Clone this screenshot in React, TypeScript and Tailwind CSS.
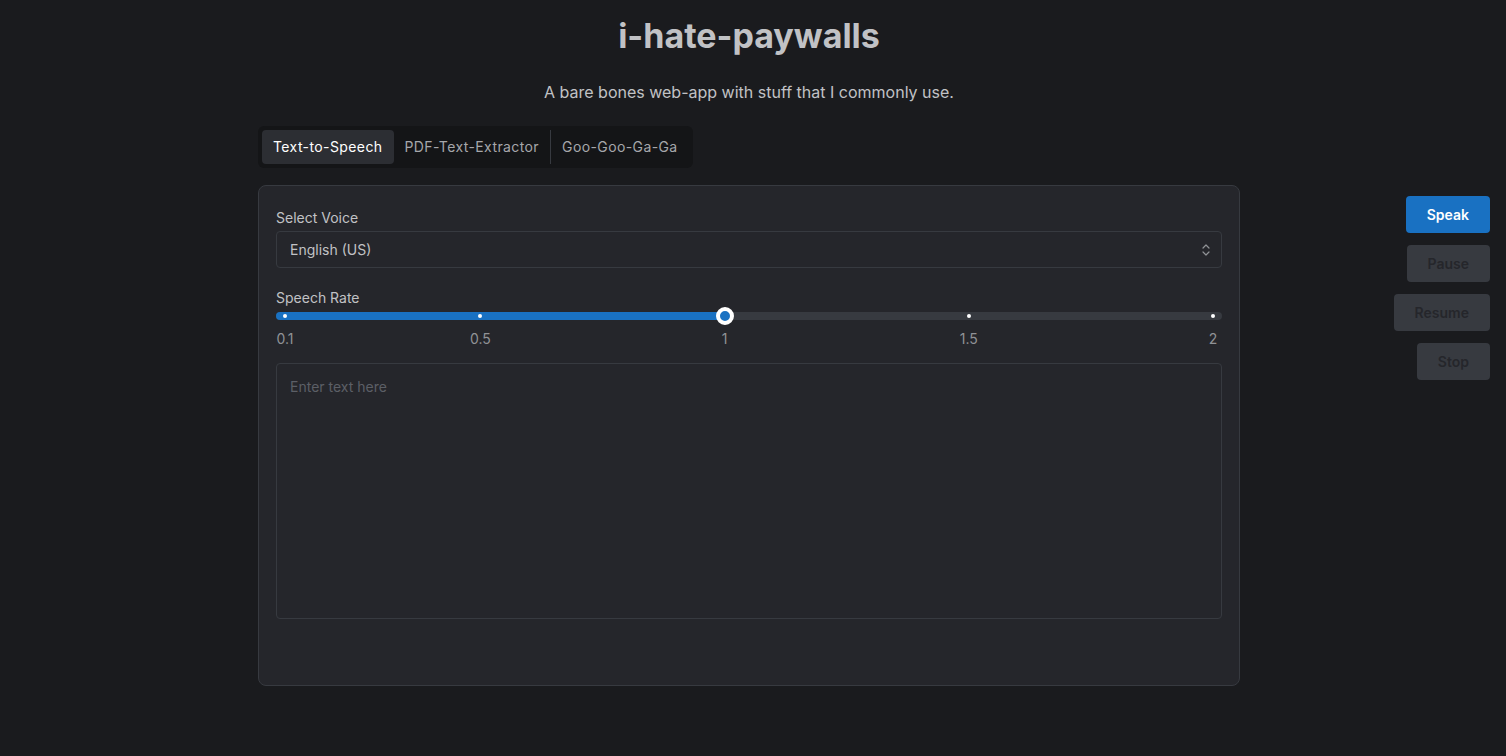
import React, { useState } from "react";

const marks = [
  { value: 0.1, label: "0.1" },
  { value: 0.5, label: "0.5" },
  { value: 1, label: "1" },
  { value: 1.5, label: "1.5" },
  { value: 2, label: "2" },
];

const MIN = 0.1;
const MAX = 2;

function pct(v: number) {
  return ((v - MIN) / (MAX - MIN)) * 100;
}

function Chevron() {
  return (
    <svg width="10" height="16" viewBox="0 0 10 16" fill="none">
      <path d="M2 6L5 3L8 6" stroke="#909296" strokeWidth="1.2" strokeLinecap="round" strokeLinejoin="round" />
      <path d="M2 10L5 13L8 10" stroke="#909296" strokeWidth="1.2" strokeLinecap="round" strokeLinejoin="round" />
    </svg>
  );
}

function RateSlider({ value }: { value: number }) {
  return (
    <div className="px-[9px]">
      <div className="relative h-[8px]">
        {/* track */}
        <div className="absolute -left-[9px] -right-[9px] top-0 h-[8px] rounded-full bg-[#373a40]" />
        <div
          className="absolute -left-[9px] top-0 h-[8px] rounded-full bg-[#1971c2]"
          style={{ width: `calc(${pct(value)}% + 9px)` }}
        />
        {marks.map((m) => (
          <div
            key={m.value}
            className="absolute top-[2px] h-[4px] w-[4px] -translate-x-1/2 rounded-full bg-white"
            style={{ left: `${pct(m.value)}%` }}
          />
        ))}
        <div
          className="absolute top-1/2 h-[18px] w-[18px] -translate-x-1/2 -translate-y-1/2 rounded-full border-[4px] border-white bg-[#1971c2]"
          style={{ left: `${pct(value)}%` }}
        />
      </div>
      <div className="relative mt-[10px] h-[18px]">
        {marks.map((m) => (
          <span
            key={m.value}
            className="absolute top-0 -translate-x-1/2 text-sm leading-[18px] text-[#909296]"
            style={{ left: `${pct(m.value)}%` }}
          >
            {m.label}
          </span>
        ))}
      </div>
    </div>
  );
}

export default function App() {
  const [tab, setTab] = useState("tts");
  const [text, setText] = useState("");

  const tabs = [
    { id: "tts", label: "Text-to-Speech" },
    { id: "pdf", label: "PDF-Text-Extractor" },
    { id: "goo", label: "Goo-Goo-Ga-Ga" },
  ];

  return (
    <div
      className="min-h-[756px] w-full bg-[#1a1b1e] text-[#c1c2c5]"
      style={{ fontFamily: "Inter, 'Noto Sans', sans-serif" }}
    >
      <div className="flex">
        <div className="w-[258px] shrink-0" />

        {/* Main column */}
        <div className="w-[982px] shrink-0">
          <h1 className="pt-[14px] text-center text-[34px] font-bold leading-[44px] text-[#c1c2c5]">
            i-hate-paywalls
          </h1>
          <p className="mt-[22px] text-center text-base leading-[24px] text-[#c1c2c5]">
            A bare bones web-app with stuff that I commonly use.
          </p>

          {/* Tabs */}
          <div className="mt-[22px] inline-flex items-center rounded-md bg-[#141517] p-[4px]">
            {tabs.map((t, i) => (
              <React.Fragment key={t.id}>
                {i === 2 && <div className="h-[34px] w-px bg-[#373a40]" />}
                <button
                  onClick={() => setTab(t.id)}
                  className={
                    tab === t.id
                      ? "h-[34px] rounded bg-[#2c2e33] px-[11px] text-sm tracking-[0.4px] text-white"
                      : "h-[34px] rounded px-[11px] text-sm tracking-[0.4px] text-[#a6a7ab]"
                  }
                >
                  {t.label}
                </button>
              </React.Fragment>
            ))}
          </div>

          {/* Card */}
          <div className="mt-[17px] h-[501px] rounded-lg border border-[#373a40] bg-[#25262b] px-[17px] pt-[21px]">
            <label className="block text-sm leading-[22px] text-[#c1c2c5]">Select Voice</label>
            <div className="mt-[2px] flex h-[37px] items-center justify-between rounded border border-[#373a40] bg-[#25262b] pl-[13px] pr-[10px]">
              <span className="text-sm text-[#c1c2c5]">English (US)</span>
              <Chevron />
            </div>

            <label className="mt-[19px] block text-sm leading-[22px] text-[#c1c2c5]">Speech Rate</label>
            <div className="mt-[3px]">
              <RateSlider value={1} />
            </div>

            <textarea
              value={text}
              onChange={(e) => setText(e.target.value)}
              placeholder="Enter text here"
              className="mt-[15px] block h-[256px] w-full resize-none rounded border border-[#373a40] bg-[#25262b] px-[13px] py-[13px] text-sm text-[#c1c2c5] outline-none placeholder:text-[#5c5f66]"
            />
          </div>
        </div>

        {/* Controls */}
        <div className="flex flex-1 flex-col items-end gap-3 pr-[16px] pt-[196px]">
          <button className="h-[37px] rounded bg-[#1971c2] px-[21px] text-sm font-semibold text-white">
            Speak
          </button>
          <button disabled className="h-[37px] rounded bg-[#373a40] px-[21px] text-sm font-semibold text-[#25262b]">
            Pause
          </button>
          <button disabled className="h-[37px] rounded bg-[#373a40] px-[21px] text-sm font-semibold text-[#25262b]">
            Resume
          </button>
          <button disabled className="h-[37px] rounded bg-[#373a40] px-[21px] text-sm font-semibold text-[#25262b]">
            Stop
          </button>
        </div>
      </div>
    </div>
  );
}
